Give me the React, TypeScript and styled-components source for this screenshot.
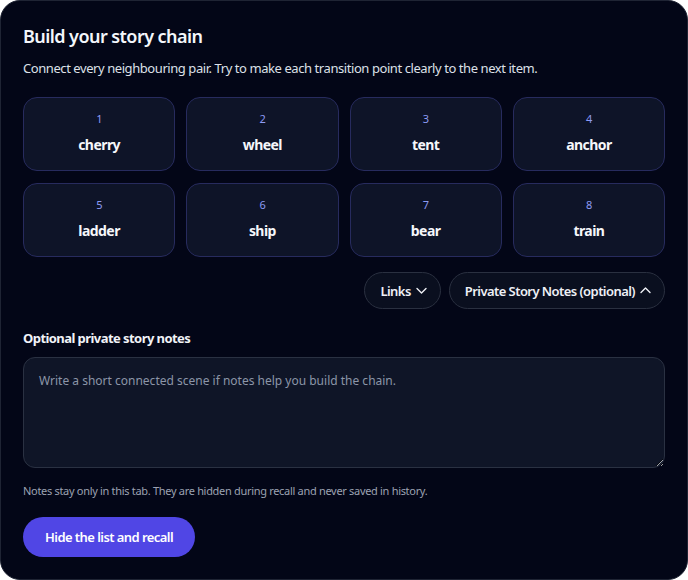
import React, { useState } from 'react';
import styled, { createGlobalStyle } from 'styled-components';

const GlobalStyle = createGlobalStyle`
  html, body {
    margin: 0;
    padding: 0;
    background: #ffffff;
  }
  * {
    box-sizing: border-box;
  }
`;

const Card = styled.div`
  width: 688px;
  height: 580px;
  background: #030617;
  border: 1px solid #1f2434;
  border-radius: 20px;
  padding: 22px 22px 0 22px;
  font-family: 'Noto Sans', 'Open Sans', sans-serif;
  letter-spacing: -0.035em;
  color: #f1f3f8;
  display: flex;
  flex-direction: column;
`;

const Title = styled.h2`
  margin: 0;
  font-size: 18px;
  font-weight: 600;
  line-height: 26px;
  color: #f4f6fb;
`;

const Intro = styled.p`
  margin: 9px 0 0 0;
  font-size: 13px;
  line-height: 20px;
  letter-spacing: -0.033em;
  color: #dde0e8;
`;

const ItemGrid = styled.div`
  display: grid;
  grid-template-columns: repeat(4, 1fr);
  gap: 12px 11px;
  margin-top: 19px;
`;

const Tile = styled.div`
  height: 74px;
  padding-bottom: 2px;
  border: 1px solid #272b5e;
  border-radius: 14px;
  background: #0e1428;
  display: flex;
  flex-direction: column;
  align-items: center;
  justify-content: center;
  gap: 9px;
`;

const TileIndex = styled.span`
  font-size: 11px;
  line-height: 14px;
  color: #8d9bf3;
`;

const TileWord = styled.span`
  font-size: 14px;
  font-weight: 700;
  line-height: 20px;
  color: #f6f7fb;
`;

const Toolbar = styled.div`
  display: flex;
  justify-content: flex-end;
  gap: 8px;
  margin-top: 15px;
`;

const PillButton = styled.button`
  height: 37px;
  padding: 0 13px 0 15px;
  border: 1px solid #2a3040;
  border-radius: 19px;
  background: #0a0f1f;
  color: #eef0f6;
  font-family: inherit;
  letter-spacing: inherit;
  font-size: 13px;
  font-weight: 600;
  display: flex;
  align-items: center;
  gap: 5px;
  cursor: pointer;
`;

const FieldLabel = styled.label`
  margin-top: 20px;
  font-size: 13px;
  font-weight: 700;
  line-height: 18px;
  color: #f1f3f8;
`;

const Notes = styled.textarea`
  margin-top: 10px;
  height: 111px;
  width: 100%;
  resize: vertical;
  border: 1px solid #2a3142;
  border-radius: 12px;
  background: #0f1527;
  color: #e6e9f0;
  padding: 14px 15px;
  font-family: inherit;
  letter-spacing: 0;
  font-size: 12px;
  line-height: 18px;
  outline: none;

  &::placeholder {
    color: #8c95a8;
  }
`;

const HelpText = styled.p`
  margin: 15px 0 0 0;
  font-size: 11px;
  line-height: 16px;
  letter-spacing: -0.028em;
  color: #9ca2b2;
`;

const PrimaryButton = styled.button`
  margin-top: 18px;
  align-self: flex-start;
  height: 40px;
  padding: 0 22px;
  border: none;
  border-radius: 20px;
  background: #5046e5;
  color: #ffffff;
  font-family: inherit;
  letter-spacing: inherit;
  font-size: 13px;
  font-weight: 600;
  cursor: pointer;
`;

const Chevron = ({ up }: { up?: boolean }) => (
  <svg width="11" height="7" viewBox="0 0 11 7" fill="none" stroke="currentColor" strokeWidth="1.4" strokeLinecap="round" strokeLinejoin="round">
    {up ? <path d="M1 5.5 5.5 1 10 5.5" /> : <path d="M1 1.5 5.5 6 10 1.5" />}
  </svg>
);

const words = ['cherry', 'wheel', 'tent', 'anchor', 'ladder', 'ship', 'bear', 'train'];

function App(): JSX.Element {
  const [notes, setNotes] = useState('');

  return (
    <>
      <GlobalStyle />
      <Card>
        <Title>Build your story chain</Title>
        <Intro>Connect every neighbouring pair. Try to make each transition point clearly to the next item.</Intro>
        <ItemGrid>
          {words.map((word, index) => (
            <Tile key={word}>
              <TileIndex>{index + 1}</TileIndex>
              <TileWord>{word}</TileWord>
            </Tile>
          ))}
        </ItemGrid>
        <Toolbar>
          <PillButton>
            Links <Chevron />
          </PillButton>
          <PillButton>
            Private Story Notes (optional) <Chevron up />
          </PillButton>
        </Toolbar>
        <FieldLabel htmlFor="notes">Optional private story notes</FieldLabel>
        <Notes
          id="notes"
          value={notes}
          onChange={(e) => setNotes(e.target.value)}
          placeholder="Write a short connected scene if notes help you build the chain."
        />
        <HelpText>Notes stay only in this tab. They are hidden during recall and never saved in history.</HelpText>
        <PrimaryButton>Hide the list and recall</PrimaryButton>
      </Card>
    </>
  );
}

export default App;
